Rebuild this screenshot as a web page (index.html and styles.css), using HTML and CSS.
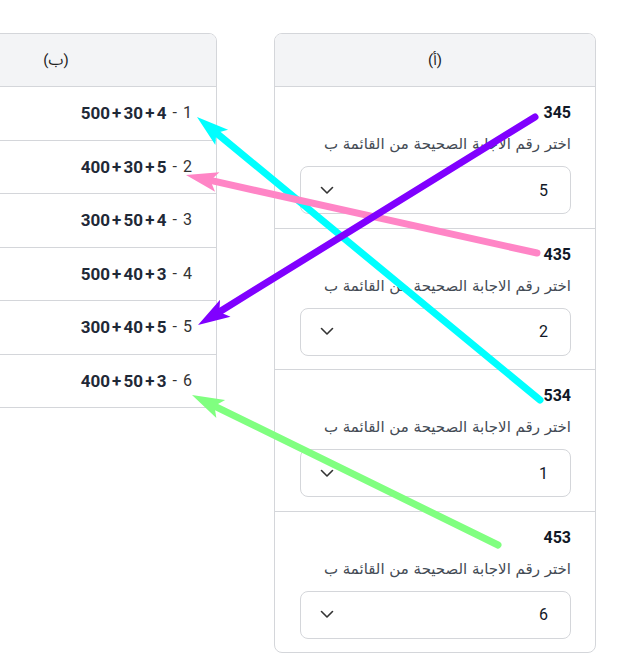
FILE: index.html
```html
<!DOCTYPE html>
<html lang="ar" dir="rtl">
<head>
<meta charset="utf-8">
<title>توصيل</title>
<link rel="stylesheet" href="styles.css">
</head>
<body>
<div class="page">
    <div class="card card-a">
        <div class="card-head">(أ)</div>
        <div class="q-row">
            <div class="q-num">345</div>
            <div class="q-label">اختر رقم الاجابة الصحيحة من القائمة ب</div>
            <div class="pick"><span>5</span><svg width="14" height="9" viewBox="0 0 14 9"><path d="M1.5 1.5 L7 7 L12.5 1.5" fill="none" stroke="#333" stroke-width="1.6" stroke-linecap="round" stroke-linejoin="round"/></svg></div>
        </div>
        <div class="q-row">
            <div class="q-num">435</div>
            <div class="q-label">اختر رقم الاجابة الصحيحة من القائمة ب</div>
            <div class="pick"><span>2</span><svg width="14" height="9" viewBox="0 0 14 9"><path d="M1.5 1.5 L7 7 L12.5 1.5" fill="none" stroke="#333" stroke-width="1.6" stroke-linecap="round" stroke-linejoin="round"/></svg></div>
        </div>
        <div class="q-row">
            <div class="q-num">534</div>
            <div class="q-label">اختر رقم الاجابة الصحيحة من القائمة ب</div>
            <div class="pick"><span>1</span><svg width="14" height="9" viewBox="0 0 14 9"><path d="M1.5 1.5 L7 7 L12.5 1.5" fill="none" stroke="#333" stroke-width="1.6" stroke-linecap="round" stroke-linejoin="round"/></svg></div>
        </div>
        <div class="q-row">
            <div class="q-num">453</div>
            <div class="q-label">اختر رقم الاجابة الصحيحة من القائمة ب</div>
            <div class="pick"><span>6</span><svg width="14" height="9" viewBox="0 0 14 9"><path d="M1.5 1.5 L7 7 L12.5 1.5" fill="none" stroke="#333" stroke-width="1.6" stroke-linecap="round" stroke-linejoin="round"/></svg></div>
        </div>
    </div>

    <div class="card card-b">
        <div class="card-head">(ب)</div>
        <div class="a-row"><span class="a-idx">1</span><span class="a-dash">-</span><span class="a-expr">500 + 30 + 4</span></div>
        <div class="a-row"><span class="a-idx">2</span><span class="a-dash">-</span><span class="a-expr">400 + 30 + 5</span></div>
        <div class="a-row"><span class="a-idx">3</span><span class="a-dash">-</span><span class="a-expr">300 + 50 + 4</span></div>
        <div class="a-row"><span class="a-idx">4</span><span class="a-dash">-</span><span class="a-expr">500 + 40 + 3</span></div>
        <div class="a-row"><span class="a-idx">5</span><span class="a-dash">-</span><span class="a-expr">300 + 40 + 5</span></div>
        <div class="a-row"><span class="a-idx">6</span><span class="a-dash">-</span><span class="a-expr">400 + 50 + 3</span></div>
    </div>

    <!-- lines drawn by the student -->
    <svg class="arrows" width="624" height="655" viewBox="0 0 624 655">
        <g stroke-linecap="round">
            <line x1="540" y1="400" x2="215.5" y2="132.3" stroke="#00ffff" stroke-width="7"/>
            <g transform="translate(197 117) rotate(219.5)"><polygon points="0,0 -32,-10 -25,0 -32,10" fill="#00ffff"/></g>

            <line x1="537" y1="253" x2="209.4" y2="180.2" stroke="#ff85c6" stroke-width="7"/>
            <g transform="translate(186 175) rotate(192.5)"><polygon points="0,0 -32,-10 -25,0 -32,10" fill="#ff85c6"/></g>

            <line x1="535" y1="117" x2="218.4" y2="312.4" stroke="#8000ff" stroke-width="7"/>
            <g transform="translate(198 325) rotate(148.5)"><polygon points="0,0 -32,-10 -25,0 -32,10" fill="#8000ff"/></g>

            <line x1="498" y1="545" x2="213.5" y2="405.6" stroke="#80ff80" stroke-width="7"/>
            <g transform="translate(192 395) rotate(206.1)"><polygon points="0,0 -32,-10 -25,0 -32,10" fill="#80ff80"/></g>
        </g>
    </svg>
</div>
</body>
</html>
```

FILE: styles.css
```css
body {
    margin: 0;
    background: #ffffff;
    font-family: Roboto, "Noto Sans Arabic", "DejaVu Sans", sans-serif;
    color: #1f2937;
}

.page {
    position: relative;
    width: 624px;
    height: 655px;
    overflow: hidden;
    box-sizing: border-box;
    padding: 33px 28px 0 0;
    display: flex;
    align-items: flex-start;
    gap: 57px;
}

.card {
    flex-shrink: 0;
    width: 322px;
    box-sizing: border-box;
    border: 1px solid #d4d6da;
    border-radius: 8px;
    background: #ffffff;
    overflow: hidden;
}

.card-head {
    height: 52px;
    line-height: 52px;
    text-align: center;
    background: #f3f4f6;
    border-bottom: 1px solid #d4d6da;
    font-size: 15px;
    color: #222;
}

/* list a */
.q-row {
    padding: 14px 24px 13.5px 25px;
    border-bottom: 1px solid #d4d6da;
}
.q-row:last-child {
    border-bottom: none;
}
.q-num {
    font-size: 16px;
    font-weight: 700;
    line-height: 24px;
    color: #111827;
}
.q-label {
    margin-top: 8px;
    font-family: "DejaVu Sans", sans-serif;
    font-size: 15px;
    line-height: 22px;
    color: #444b55;
}
.pick {
    margin-top: 11px;
    height: 48px;
    box-sizing: border-box;
    border: 1px solid #d4d6da;
    border-radius: 8px;
    display: flex;
    align-items: center;
    justify-content: space-between;
    padding: 0 22px 0 19px;
    font-size: 16px;
    color: #111827;
}
.pick svg {
    display: block;
}

/* list b */
.a-row {
    display: flex;
    align-items: center;
    gap: 6px;
    padding: 14px 24px 14.5px;
    line-height: 24px;
    border-bottom: 1px solid #d4d6da;
    font-size: 16px;
}
.a-row:last-child {
    border-bottom: none;
}
.a-idx, .a-dash {
    color: #333;
}
.a-expr {
    direction: ltr;
    unicode-bidi: isolate;
    font-size: 17px;
    font-weight: 700;
    color: #1f2937;
    word-spacing: -2px;
}

.arrows {
    position: absolute;
    top: 0;
    left: 0;
    pointer-events: none;
}
```
